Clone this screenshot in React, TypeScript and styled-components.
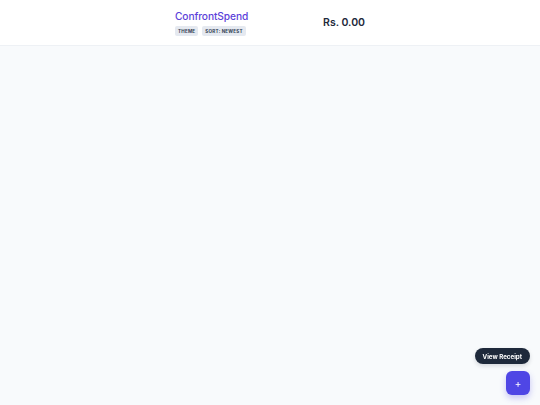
import React from 'react';
import styled, { createGlobalStyle } from 'styled-components';

const GlobalStyle = createGlobalStyle`
  html, body {
    margin: 0;
    padding: 0;
    background: #f8fafc;
    font-family: Inter, 'Liberation Sans', sans-serif;
  }
  * { box-sizing: border-box; }
`;

const Page = styled.div`
  min-height: 405px;
  background: #f8fafc;
  display: flex;
  flex-direction: column;
`;

const Header = styled.header`
  background: #ffffff;
  border-bottom: 1px solid #eef1f5;
  height: 46px;
  display: flex;
  justify-content: center;
`;

const HeaderInner = styled.div`
  width: 190px;
  display: flex;
  justify-content: space-between;
  align-items: center;
  padding-top: 1px;
`;

const Brand = styled.div`
  display: flex;
  flex-direction: column;
  gap: 3px;
`;

const Title = styled.h1`
  margin: 0;
  font-size: 10.2px;
  line-height: 13px;
  font-weight: 500;
  color: #5b3fd9;
  letter-spacing: -0.1px;
`;

const Tags = styled.div`
  display: flex;
  gap: 4px;
`;

const Tag = styled.span`
  background: #e5e9f0;
  color: #334155;
  font-size: 4.6px;
  font-weight: 700;
  letter-spacing: 0.2px;
  text-transform: uppercase;
  padding: 2.5px 3px;
  border-radius: 2px;
  line-height: 5px;
`;

const Total = styled.div`
  font-size: 10.5px;
  font-weight: 600;
  color: #1e293b;
  margin-bottom: 2px;
`;

const Actions = styled.div`
  position: fixed;
  right: 10px;
  bottom: 10px;
  display: flex;
  flex-direction: column;
  align-items: flex-end;
  gap: 7px;
`;

const ReceiptButton = styled.button`
  background: #1e293b;
  color: #ffffff;
  border: none;
  border-radius: 8px;
  height: 16px;
  padding: 0 8px;
  font-family: inherit;
  font-size: 6.2px;
  font-weight: 700;
  box-shadow: 0 2px 4px rgba(15, 23, 42, 0.15);
`;

const Fab = styled.button`
  width: 24px;
  height: 24px;
  border: none;
  border-radius: 6px;
  background: #4f46e5;
  color: #ffffff;
  font-family: inherit;
  font-size: 10px;
  line-height: 1;
  display: flex;
  align-items: center;
  justify-content: center;
  box-shadow: 0 3px 6px rgba(79, 70, 229, 0.3);
`;

const App: React.FC = () => (
  <>
    <GlobalStyle />
    <Page>
      <Header>
        <HeaderInner>
          <Brand>
            <Title>ConfrontSpend</Title>
            <Tags>
              <Tag>Theme</Tag>
              <Tag>Sort: Newest</Tag>
            </Tags>
          </Brand>
          <Total>Rs. 0.00</Total>
        </HeaderInner>
      </Header>
      <Actions>
        <ReceiptButton>View Receipt</ReceiptButton>
        <Fab>+</Fab>
      </Actions>
    </Page>
  </>
);

export default App;
